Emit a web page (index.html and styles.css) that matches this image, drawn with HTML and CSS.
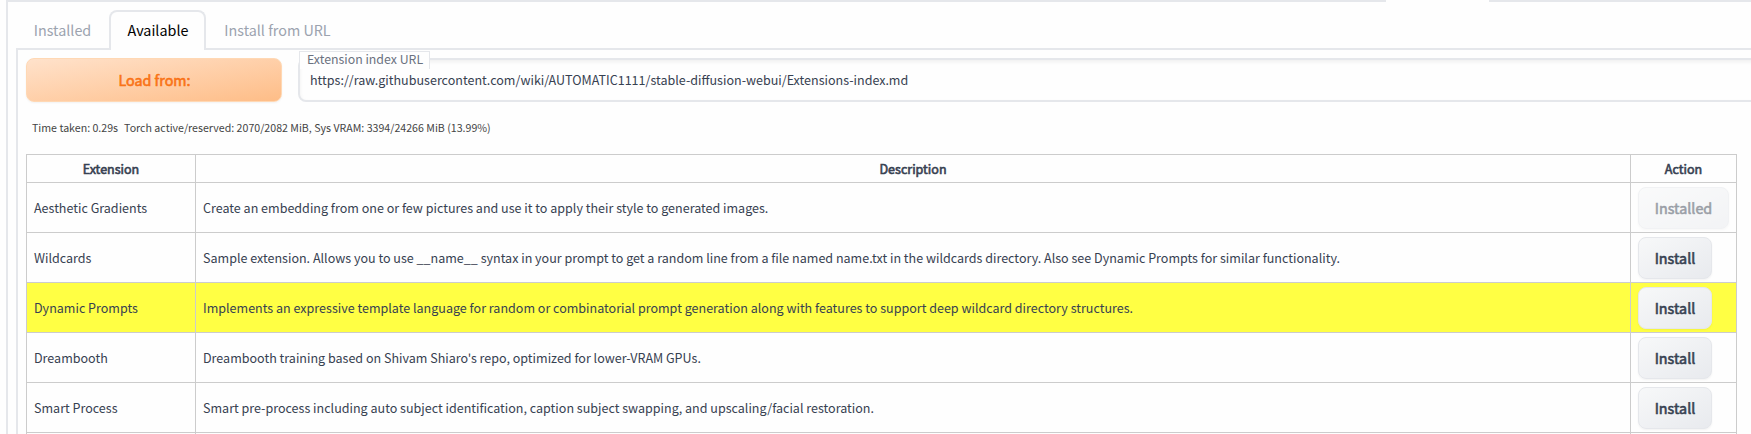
FILE: index.html
```html
<!DOCTYPE html>
<html lang="en">
<head>
<meta charset="utf-8">
<title>Extensions</title>
<link rel="stylesheet" href="styles.css">
</head>
<body>
<main class="panel">
  <div class="panel-edge"><span class="edge-left"></span><span class="edge-right"></span></div>
  <nav class="tabs">
    <button class="tab">Installed</button>
    <button class="tab tab-active">Available</button>
    <button class="tab">Install from URL</button>
    <span class="tab-fill"></span>
  </nav>
  <section class="content">
    <div class="controls">
      <button class="load">Load from:</button>
      <div class="field">
        <span class="field-label">Extension index URL</span>
        <span class="field-value">https://raw.githubusercontent.com/wiki/AUTOMATIC1111/stable-diffusion-webui/Extensions-index.md</span>
      </div>
    </div>
    <p class="status"><span class="time">Time taken: 0.29s</span><span class="vram">Torch active/reserved: 2070/2082 MiB, Sys VRAM: 3394/24266 MiB (13.99%)</span></p>
    <table class="extensions">
      <colgroup><col class="col-name"><col class="col-desc"><col class="col-action"></colgroup>
      <thead><tr><th>Extension</th><th>Description</th><th>Action</th></tr></thead>
      <tbody>
        <tr><td>Aesthetic Gradients</td><td>Create an embedding from one or few pictures and use it to apply their style to generated images.</td><td><button class="action" disabled>Installed</button></td></tr>
        <tr><td>Wildcards</td><td>Sample extension. Allows you to use __name__ syntax in your prompt to get a random line from a file named name.txt in the wildcards directory. Also see Dynamic Prompts for similar functionality.</td><td><button class="action">Install</button></td></tr>
        <tr class="highlight"><td>Dynamic Prompts</td><td>Implements an expressive template language for random or combinatorial prompt generation along with features to support deep wildcard directory structures.</td><td><button class="action">Install</button></td></tr>
        <tr><td>Dreambooth</td><td>Dreambooth training based on Shivam Shiaro's repo, optimized for lower-VRAM GPUs.</td><td><button class="action">Install</button></td></tr>
        <tr><td>Smart Process</td><td>Smart pre-process including auto subject identification, caption subject swapping, and upscaling/facial restoration.</td><td><button class="action">Install</button></td></tr>
        <tr class="row-next"><td></td><td></td><td></td></tr>
      </tbody>
    </table>
  </section>
</main>
</body>
</html>
```

FILE: styles.css
```css
* { box-sizing: border-box; }

body {
  margin: 0;
  height: 434px;
  overflow: hidden;
  background: #fefefe;
  color: #374151;
  font-family: "Noto Sans CJK SC", "Open Sans", sans-serif;
  font-size: 12.54px;
  line-height: 20px;
}

button { font-family: inherit; margin: 0; }

.panel {
  margin-left: 6px;
  height: 434px;
  border-left: 2px solid #e5e7eb;
}

.panel-edge {
  display: flex;
  height: 2px;
  margin-left: -2px;
}
.edge-left { width: 1380px; background: #e5e7eb; }
.edge-right { flex: 1; margin-left: 103px; background: #e5e7eb; }

.tabs {
  display: flex;
  height: 48px;
  padding: 8px 0 0 8px;
}

.tab {
  height: 40px;
  padding: 2px 16px 0;
  width: 93px;
  border: 0;
  border-bottom: 2px solid #e5e7eb;
  background: none;
  color: #9ca3af;
  font-size: 14.35px;
  line-height: 36px;
  white-space: nowrap;
}
.tab-active {
  width: 97px;
  border: 2px solid #e5e7eb;
  border-bottom: 0;
  border-radius: 8px 8px 0 0;
  color: #000;
  padding: 0 0 2px 1px;
}
.tab:nth-child(3) { width: 143px; }
.tab-fill { flex: 1; border-bottom: 2px solid #e5e7eb; }

.content {
  margin-left: 8px;
  height: 384px;
  overflow: hidden;
  padding: 8px 0 0 8px;
  border-left: 2px solid #e5e7eb;
}

.controls { display: flex; gap: 16px; height: 44px; }

.load {
  width: 256px;
  height: 44px;
  padding: 0 0 2px 1px;
  border: 1px solid #ffd8b4;
  border-radius: 8px;
  background: linear-gradient(to bottom right, #ffe2cb, #febd87);
  box-shadow: 0 1px 2px rgba(0, 0, 0, .05);
  color: #f97316;
  font-size: 14.3px;
  font-weight: 400;
  -webkit-text-stroke: .6px #f97316;
}

.field {
  position: relative;
  flex: 1;
  margin-right: -20px;
  padding: 10px 10px;
  border: 2px solid #e5e7eb;
  border-radius: 8px;
  box-shadow: inset 0 2px 4px rgba(0, 0, 0, .06);
  white-space: nowrap;
}
.field-label {
  position: absolute;
  top: -9px;
  left: -1px;
  width: 131px;
  height: 18px;
  padding-left: 7px;
  border: 1px solid #e5e7eb;
  border-bottom: 0;
  background: #fefefe;
  color: #6b7280;
  font-size: 12.35px;
  line-height: 14px;
}

.status {
  display: flex;
  gap: 6px;
  margin: 16px 0 16px 6px;
  height: 20px;
  color: #444;
  font-size: 10.64px;
}

.extensions {
  width: 1711px;
  border-collapse: collapse;
  table-layout: fixed;
}
.col-name { width: 169px; }
.col-action { width: 106px; }
.extensions th, .extensions td {
  border: 1px solid #ccc;
  padding: 0 7px;
  height: 50px;
  text-align: left;
  white-space: nowrap;
  vertical-align: middle;
}
.extensions th {
  height: 28px;
  text-align: center;
  font-weight: 400;
  -webkit-text-stroke: .6px #374151;
}
.extensions .row-next td { height: 2px; border-bottom: 0; }
.highlight { background: #ffff44; }

.action {
  display: block;
  height: 42px;
  width: 74px;
  padding: 0;
  border: 1px solid #e5e7eb;
  border-radius: 8px;
  background: linear-gradient(to bottom right, #f7f8f9, #e8eaee);
  box-shadow: 0 1px 2px rgba(0, 0, 0, .05);
  color: #374151;
  font-size: 14.35px;
  -webkit-text-stroke: .6px #374151;
}
.action:disabled { width: 91px; opacity: .5; }
```
